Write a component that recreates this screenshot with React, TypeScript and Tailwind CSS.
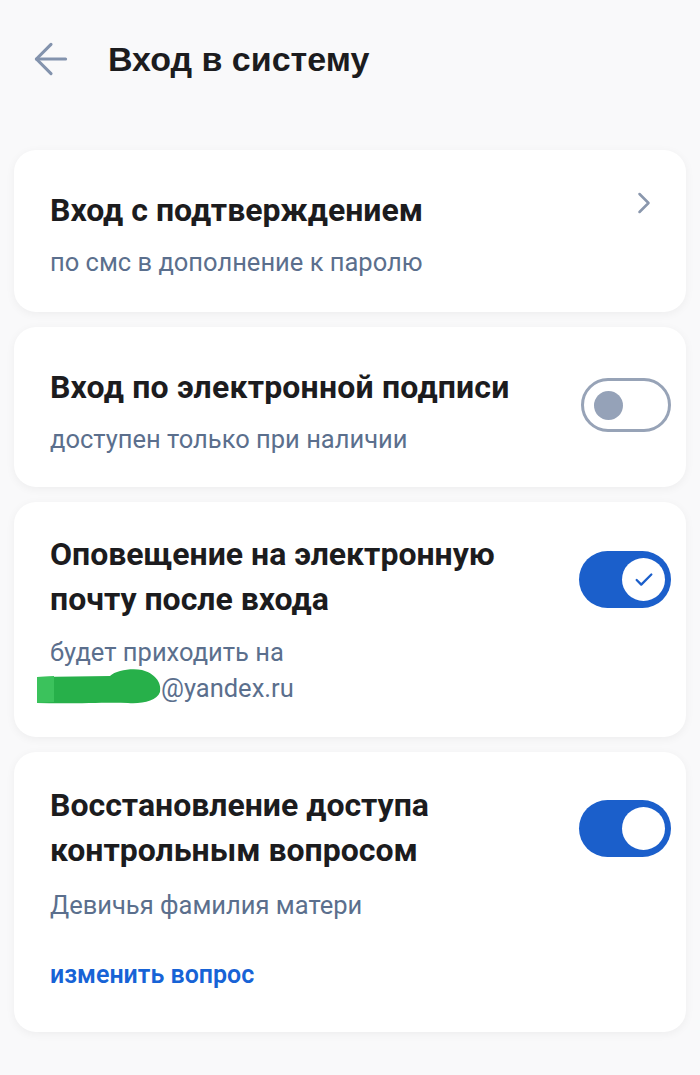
import { ChevronRight, ArrowLeft, Check } from "lucide-react";

function Toggle({ on, check }: { on: boolean; check?: boolean }) {
  if (!on) {
    return (
      <div className="w-[90px] h-[54px] rounded-full border-[3px] border-[#97a3b7] bg-white flex items-center px-[10px] shrink-0">
        <div className="w-[29px] h-[29px] rounded-full bg-[#95a2b8]" />
      </div>
    );
  }
  return (
    <div className="w-[92px] h-[57px] rounded-full bg-[#1b5fcb] flex items-center justify-end pr-[6px] shrink-0">
      <div className="w-[43px] h-[43px] rounded-full bg-white flex items-center justify-center">
        {check && <Check size={22} strokeWidth={2.5} className="text-[#1b5fcb]" />}
      </div>
    </div>
  );
}

function Card({ children, className = "" }: { children: React.ReactNode; className?: string }) {
  return (
    <div
      className={
        "bg-white rounded-[22px] shadow-[0_2px_10px_rgba(0,0,0,0.05)] pl-[36px] pr-[15px] " + className
      }
    >
      {children}
    </div>
  );
}

export default function App() {
  return (
    <div
      className="w-[700px] h-[1075px] bg-[#f9f9fa] overflow-hidden"
      style={{ fontFamily: "Roboto, 'Liberation Sans', sans-serif" }}
    >
      <div className="flex items-center h-[120px] pl-[26px] pb-[2px]">
        <ArrowLeft size={50} strokeWidth={1.5} className="text-[#8393ad] shrink-0" />
        <h1 className="ml-[32px] text-[34px] font-bold text-[#1c1c1e] font-['Liberation_Sans',sans-serif]">
          Вход в систему
        </h1>
      </div>

      <div className="flex flex-col gap-[15px] px-[14px] pt-[30px]">
        <Card className="h-[162px] pt-[33px]">
          <div className="flex justify-between">
            <div className="text-[32px] font-bold text-[#1c1c1e] leading-[54px]">Вход с подтверждением</div>
            <ChevronRight size={36} strokeWidth={1.7} className="text-[#8a97ad] mr-[9px] mt-[2px] shrink-0" />
          </div>
          <div className="text-[25.5px] text-[#5b6f8d] leading-[50px]">по смс в дополнение к паролю</div>
        </Card>

        <Card className="h-[160px] pt-[33px]">
          <div className="flex justify-between items-start">
            <div>
              <div className="text-[32px] font-bold text-[#1c1c1e] leading-[54px] tracking-[0.2px]">Вход по электронной подписи</div>
              <div className="text-[25.5px] text-[#5b6f8d] leading-[50px]">доступен только при наличии</div>
            </div>
            <div className="mt-[18px]">
              <Toggle on={false} />
            </div>
          </div>
        </Card>

        <Card className="h-[235px] pt-[30px]">
          <div className="flex justify-between items-start">
            <div>
              <div className="text-[32px] font-bold text-[#1c1c1e] leading-[45px]">
                Оповещение на электронную
                <br />
                почту после входа
              </div>
              <div className="text-[25.5px] text-[#5b6f8d] leading-[36px] mt-[12px]">
                будет приходить на
                <br />
                <span className="inline-flex items-center -ml-[14px]">
                  <svg width="126" height="36" viewBox="0 0 126 36" className="-mr-[1px] shrink-0 mt-[-4px]">
                    <path
                      d="M1 9 L74 8 C80 2 96 0 106 2 C118 5 126 14 124 24 C121 33 106 36 92 35 C70 34 40 36 1 35 Z"
                      fill="#27b04a"
                    />
                    <path d="M1 9 L18 8 L18 34 L1 35 Z" fill="#3bc25c" />
                  </svg>
                  @yandex.ru
                </span>
              </div>
            </div>
            <div className="mt-[19px]">
              <Toggle on check />
            </div>
          </div>
        </Card>

        <Card className="h-[280px] pt-[31px]">
          <div className="flex justify-between items-start">
            <div>
              <div className="text-[32px] font-bold text-[#1c1c1e] leading-[45px]">
                Восстановление доступа
                <br />
                контрольным вопросом
              </div>
              <div className="text-[25.5px] text-[#5b6f8d] leading-[50px] mt-[7px]">Девичья фамилия матери</div>
              <div className="text-[25px] font-semibold text-[#1763d6] mt-[26px]">изменить вопрос</div>
            </div>
            <div className="mt-[17px]">
              <Toggle on />
            </div>
          </div>
        </Card>
      </div>
    </div>
  );
}
